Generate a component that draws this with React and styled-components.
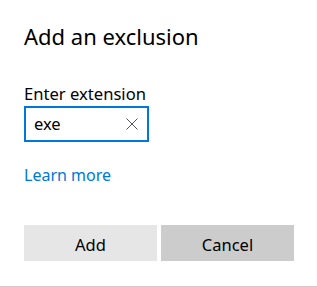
import styled, { createGlobalStyle } from 'styled-components';

const GlobalStyle = createGlobalStyle`
  html, body {
    margin: 0;
    padding: 0;
    background: #fff;
  }
  body {
    font-family: "Noto Sans", "Open Sans", sans-serif;
    color: #000;
  }
`;

const Dialog = styled.div`
  box-sizing: border-box;
  width: 317px;
  height: 287px;
  padding: 22px 23px 0 24px;
  display: flex;
  flex-direction: column;
  border-bottom: 1px solid #cccccc;
  background: #fff;
`;

const Title = styled.h1`
  margin: 0;
  font-size: 22px;
  line-height: 28px;
  font-weight: 400;
  color: #000;
`;

const Label = styled.label`
  margin-top: 34px;
  font-size: 16.6px;
  line-height: 20px;
  color: #000;
`;

const InputBox = styled.div`
  box-sizing: border-box;
  margin-top: 2px;
  width: 125px;
  height: 36px;
  border: 2px solid #0078d7;
  display: flex;
  align-items: center;
  padding: 0 9px 0 8px;
`;

const Input = styled.span`
  flex: 1;
  font-size: 16.5px;
  line-height: 20px;
  color: #000;
`;

const ClearButton = styled.span`
  display: flex;
  width: 12px;
  height: 12px;
  margin-top: -1px;
`;

const Link = styled.a`
  margin-top: 23px;
  font-size: 16px;
  line-height: 20px;
  color: #0078d7;
  text-decoration: none;
  align-self: flex-start;
`;

const ButtonRow = styled.div`
  margin-top: 40px;
  display: grid;
  grid-template-columns: 133px 133px;
  gap: 4px;
`;

const Button = styled.button`
  height: 36px;
  border: 0;
  padding: 2px 0 0;
  font-family: inherit;
  font-size: 16.5px;
  color: #000;
  background: ${(p) => (p.$secondary ? '#cccccc' : '#e6e6e6')};
`;

const App = () => {
  return (
    <>
      <GlobalStyle />
      <Dialog>
        <Title>Add an exclusion</Title>
        <Label>Enter extension</Label>
        <InputBox>
          <Input>exe</Input>
          <ClearButton>
            <svg width="12" height="12" viewBox="0 0 12 12">
              <path d="M0.5 0.5 L11.5 11.5 M11.5 0.5 L0.5 11.5" stroke="#555" strokeWidth="1" fill="none" />
            </svg>
          </ClearButton>
        </InputBox>
        <Link href="#">Learn more</Link>
        <ButtonRow>
          <Button>Add</Button>
          <Button $secondary>Cancel</Button>
        </ButtonRow>
      </Dialog>
    </>
  );
};

export default App;
